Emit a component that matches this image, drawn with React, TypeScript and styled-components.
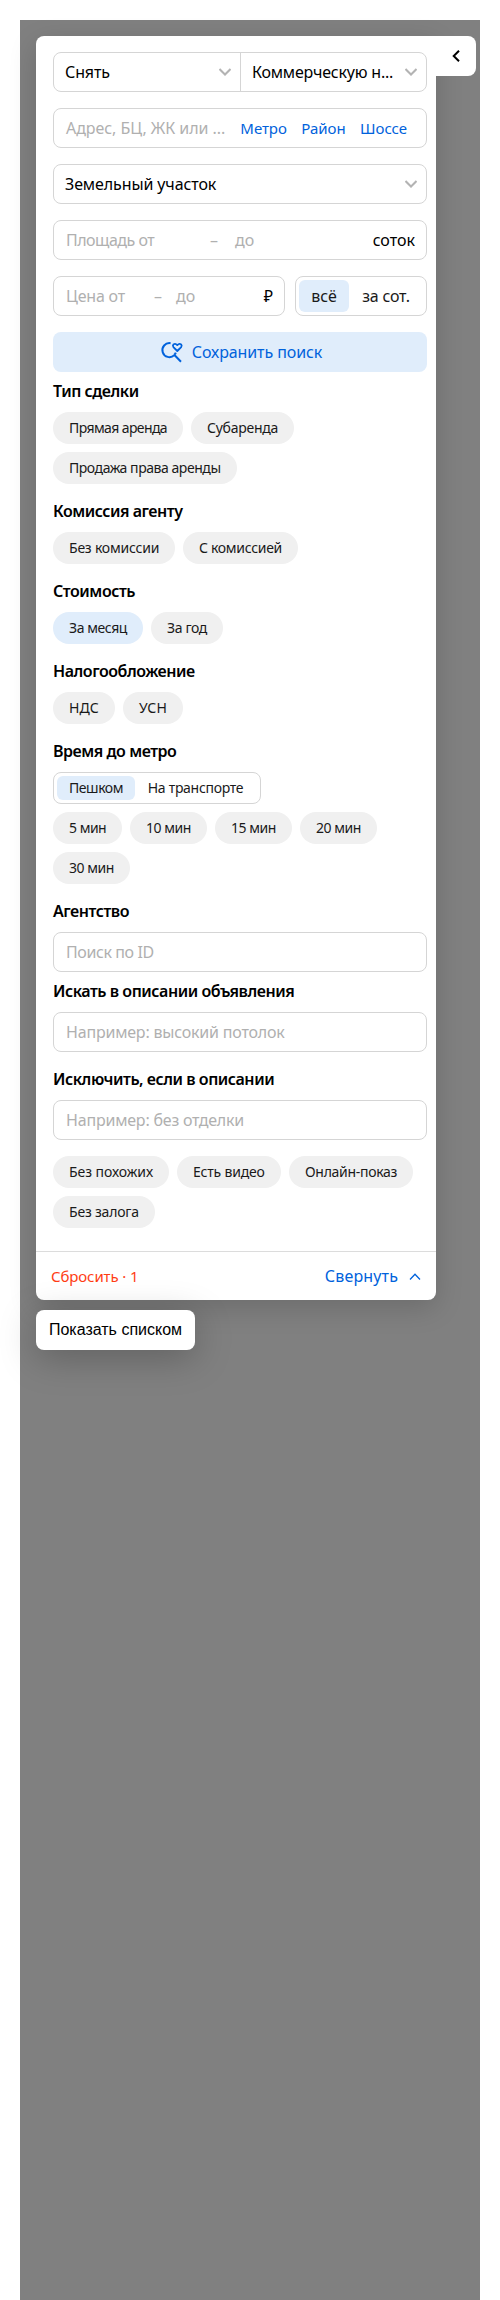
import React from 'react';
import styled, { createGlobalStyle, css } from 'styled-components';

const GlobalStyle = createGlobalStyle`
  * { box-sizing: border-box; }
  body { margin: 0; background: #fff; font-family: "Noto Sans", "Liberation Sans", sans-serif; color: #000; }
  button, input { font: inherit; color: inherit; letter-spacing: inherit; }
`;

const Page = styled.div`
  padding: 20px 20px 0;
`;

const MapArea = styled.main`
  height: 2280px;
  padding: 16px 4px 0 16px;
  background: #808080;
`;

const PanelRow = styled.div`
  display: flex;
  align-items: flex-start;
`;

const Panel = styled.section`
  width: 400px;
  height: 1264px;
  display: flex;
  flex-direction: column;
  background: #fff;
  border-radius: 8px 0 8px 8px;
  box-shadow: 0 8px 28px rgba(0, 0, 0, 0.16);
`;

const CollapseButton = styled.button`
  width: 40px;
  height: 40px;
  padding: 0 1px 0 0;
  display: flex;
  align-items: center;
  justify-content: center;
  border: 0;
  background: #fff;
  border-radius: 0 8px 8px 0;
`;

const Filters = styled.div`
  flex: 1;
  padding: 16px 9px 0 17px;
`;

const MainFields = styled.div`
  display: flex;
  flex-direction: column;
  gap: 16px;
`;

const fieldBox = css`
  height: 40px;
  border: 1px solid #d5d5d5;
  border-radius: 8px;
  background: #fff;
`;

const SelectGroup = styled.div`
  ${fieldBox}
  display: flex;
`;

const SelectButton = styled.button<{ $width?: number; $tracking?: number }>`
  flex: ${p => (p.$width ? `0 0 ${p.$width}px` : '1')};
  padding: 0 9px 0 11px;
  display: flex;
  align-items: center;
  justify-content: space-between;
  border: 0;
  background: none;
  font-size: 16px;
  letter-spacing: ${p => p.$tracking ?? 0}px;
  white-space: nowrap;

  & + & {
    border-left: 1px solid #d5d5d5;
  }
`;

const Field = styled.div<{ $width?: number }>`
  ${fieldBox}
  width: ${p => (p.$width ? `${p.$width}px` : '100%')};
  padding: 0 11px 0 12px;
  display: flex;
  align-items: center;
  font-size: 16px;
  line-height: 24px;
  white-space: nowrap;
`;

const Hint = styled.span<{ $width?: number; $tracking?: number }>`
  flex: none;
  width: ${p => (p.$width ? `${p.$width}px` : 'auto')};
  color: #b0b0b0;
  letter-spacing: ${p => p.$tracking ?? 0}px;
`;

const Unit = styled.span`
  margin-left: auto;
`;

const GeoLinks = styled.div`
  display: flex;
  gap: 14.5px;
  padding-right: 8px;
  margin-left: auto;
  color: #0062dc;
  font-size: 15px;
  letter-spacing: -0.05px;
`;

const PriceRow = styled.div`
  display: flex;
  justify-content: space-between;
`;

const Segmented = styled.div<{ $width: number; $height: number; $size: number }>`
  width: ${p => p.$width}px;
  height: ${p => p.$height}px;
  padding: 3px;
  display: flex;
  border: 1px solid #d5d5d5;
  border-radius: 8px;
  font-size: ${p => p.$size}px;
  color: #1a1a1a;
`;

const Segment = styled.button<{ $width: number; $active?: boolean; $tracking?: number }>`
  width: ${p => p.$width}px;
  padding: 0 0 1px;
  border: 0;
  border-radius: 6px;
  background: ${p => (p.$active ? '#e0edfb' : 'transparent')};
  letter-spacing: ${p => p.$tracking ?? 0}px;
  white-space: nowrap;
`;

const SaveButton = styled.button`
  height: 40px;
  padding: 0 0 1px 2px;
  display: flex;
  align-items: center;
  justify-content: center;
  gap: 8px;
  border: 0;
  border-radius: 8px;
  background: #e0edfb;
  color: #0062dc;
  font-size: 16px;
  letter-spacing: -0.1px;
`;

const Section = styled.section<{ $after?: number }>`
  margin-bottom: ${p => p.$after ?? 8}px;
`;

const Heading = styled.h3`
  height: 40px;
  margin: 0;
  font-size: 16px;
  font-weight: 600;
  line-height: 38px;
  letter-spacing: -0.46px;
  white-space: nowrap;
`;

const Chips = styled.div<{ $before?: number }>`
  display: flex;
  flex-wrap: wrap;
  gap: 8px;
  margin-top: ${p => p.$before ?? 0}px;
`;

const ChipButton = styled.button<{ $width: number; $tracking: number; $active?: boolean }>`
  width: ${p => p.$width}px;
  height: 32px;
  padding: 0 0 0 16px;
  border: 0;
  border-radius: 16px;
  background: ${p => (p.$active ? '#e0edfb' : '#f0f0f0')};
  color: #1a1a1a;
  font-size: 14px;
  line-height: 32px;
  text-align: left;
  letter-spacing: ${p => p.$tracking}px;
  white-space: nowrap;
`;

const Footer = styled.footer`
  height: 49px;
  padding: 0 15px;
  display: flex;
  align-items: center;
  justify-content: space-between;
  border-top: 1px solid #dcdcdc;
`;

const ResetButton = styled.button`
  padding: 0 0 1px;
  border: 0;
  background: none;
  color: #ff3d14;
  font-size: 15px;
  letter-spacing: -0.12px;
`;

const FoldButton = styled.button`
  padding: 0 0 1px;
  display: flex;
  align-items: center;
  gap: 11px;
  border: 0;
  background: none;
  color: #0062dc;
  font-size: 16px;
  letter-spacing: 0.15px;
`;

const ListButton = styled.button`
  position: relative;
  width: 159px;
  height: 40px;
  margin-top: 10px;
  padding: 0;
  display: block;
  border: 0;
  border-radius: 8px;
  background: #fff;
  box-shadow: 0 8px 36px rgba(0, 0, 0, 0.25);
  font-family: "Liberation Sans", Arial, sans-serif;
  font-size: 16px;
  white-space: nowrap;
`;

const ChevronDown = () => (
  <svg width="12" height="8" viewBox="0 0 12 8" fill="none" stroke="#b3b3b3" strokeWidth="2">
    <path d="M0.5 1 6 6.5 11.5 1" />
  </svg>
);

const ChevronUp = () => (
  <svg width="12" height="8" viewBox="0 0 12 8" fill="none" stroke="#0062dc" strokeWidth="1.3">
    <path d="M1 7.5 6 2.3 11 7.5" />
  </svg>
);

const ChevronLeft = () => (
  <svg width="8" height="12" viewBox="0 0 8 12" fill="none" stroke="#000" strokeWidth="2">
    <path d="M7 0.7 1.7 6 7 11.3" />
  </svg>
);

const SearchHeartIcon = () => (
  <svg width="24" height="24" viewBox="0 0 24 24" fill="none" stroke="#0062dc" strokeWidth="2">
    <path d="M10.6 3.2A7 7 0 1 0 14.3 15.1M14.2 14.8 21 21.8M14.2 14.8Q15.4 13.8 15.8 12.6" />
    <path strokeWidth="1.8" strokeLinejoin="round" d="M17.3 11 13.4 7.1Q12.4 5.7 13.5 4.4Q15.4 3 17.3 5.1Q19.2 3 21.1 4.4Q22.2 5.7 21.2 7.1Z" />
  </svg>
);

interface ChipData {
  label: string;
  width: number;
  tracking: number;
  active?: boolean;
}

const dealTypes: ChipData[] = [
  { label: 'Прямая аренда', width: 130, tracking: -0.6 },
  { label: 'Субаренда', width: 103, tracking: -0.25 },
  { label: 'Продажа права аренды', width: 184, tracking: -0.45 },
];
const commissions: ChipData[] = [
  { label: 'Без комиссии', width: 122, tracking: -0.22 },
  { label: 'С комиссией', width: 115, tracking: -0.3 },
];
const periods: ChipData[] = [
  { label: 'За месяц', width: 90, tracking: -0.42, active: true },
  { label: 'За год', width: 72, tracking: -0.36 },
];
const taxes: ChipData[] = [
  { label: 'НДС', width: 62, tracking: 0.1 },
  { label: 'УСН', width: 60, tracking: 0.2 },
];
const metroTimes: ChipData[] = [
  { label: '5 мин', width: 69, tracking: -0.5 },
  { label: '10 мин', width: 77, tracking: -0.45 },
  { label: '15 мин', width: 77, tracking: -0.45 },
  { label: '20 мин', width: 77, tracking: -0.45 },
  { label: '30 мин', width: 77, tracking: -0.45 },
];
const extras: ChipData[] = [
  { label: 'Без похожих', width: 116, tracking: -0.06 },
  { label: 'Есть видео', width: 104, tracking: -0.2 },
  { label: 'Онлайн-показ', width: 124, tracking: -0.3 },
  { label: 'Без залога', width: 102, tracking: -0.2 },
];

const ChipList = ({ items, before }: { items: ChipData[]; before?: number }) => (
  <Chips $before={before}>
    {items.map(c => (
      <ChipButton key={c.label} $width={c.width} $tracking={c.tracking} $active={c.active}>
        {c.label}
      </ChipButton>
    ))}
  </Chips>
);

export default function App() {
  return (
    <Page>
      <GlobalStyle />
      <MapArea>
        <PanelRow>
          <Panel>
            <Filters>
              <MainFields>
                <SelectGroup>
                  <SelectButton $width={186} $tracking={-0.1}>Снять<ChevronDown /></SelectButton>
                  <SelectButton $tracking={-0.2}>Коммерческую н...<ChevronDown /></SelectButton>
                </SelectGroup>
                <Field>
                  <Hint $tracking={-0.05}>Адрес, БЦ, ЖК или ...</Hint>
                  <GeoLinks><span>Метро</span><span>Район</span><span>Шоссе</span></GeoLinks>
                </Field>
                <SelectGroup>
                  <SelectButton $tracking={-0.1}>Земельный участок<ChevronDown /></SelectButton>
                </SelectGroup>
                <Field>
                  <Hint $width={144} $tracking={-0.5}>Площадь от</Hint>
                  <Hint $width={25}>–</Hint>
                  <Hint>до</Hint>
                  <Unit>соток</Unit>
                </Field>
                <PriceRow>
                  <Field $width={232}>
                    <Hint $width={88} $tracking={-0.2}>Цена от</Hint>
                    <Hint $width={22}>–</Hint>
                    <Hint>до</Hint>
                    <Unit>₽</Unit>
                  </Field>
                  <Segmented $width={132} $height={40} $size={16}>
                    <Segment $width={50} $active>всё</Segment>
                    <Segment $width={74} $tracking={-0.2}>за сот.</Segment>
                  </Segmented>
                </PriceRow>
                <SaveButton><SearchHeartIcon />Сохранить поиск</SaveButton>
              </MainFields>

              <Section><Heading>Тип сделки</Heading><ChipList items={dealTypes} /></Section>
              <Section><Heading>Комиссия агенту</Heading><ChipList items={commissions} /></Section>
              <Section><Heading>Стоимость</Heading><ChipList items={periods} /></Section>
              <Section><Heading>Налогообложение</Heading><ChipList items={taxes} /></Section>
              <Section>
                <Heading>Время до метро</Heading>
                <Segmented $width={208} $height={32} $size={14}>
                  <Segment $width={78} $active $tracking={-0.45}>Пешком</Segment>
                  <Segment $width={121} $tracking={-0.3}>На транспорте</Segment>
                </Segmented>
                <ChipList items={metroTimes} before={8} />
              </Section>
              <Section $after={0}>
                <Heading>Агентство</Heading>
                <Field><Hint $tracking={-0.4}>Поиск по ID</Hint></Field>
              </Section>
              <Section>
                <Heading>Искать в описании объявления</Heading>
                <Field><Hint $tracking={-0.2}>Например: высокий потолок</Hint></Field>
              </Section>
              <Section>
                <Heading>Исключить, если в описании</Heading>
                <Field><Hint $tracking={-0.2}>Например: без отделки</Hint></Field>
                <ChipList items={extras} before={16} />
              </Section>
            </Filters>
            <Footer>
              <ResetButton>Сбросить · 1</ResetButton>
              <FoldButton>Свернуть<ChevronUp /></FoldButton>
            </Footer>
          </Panel>
          <CollapseButton aria-label="Скрыть фильтры"><ChevronLeft /></CollapseButton>
        </PanelRow>
        <ListButton>Показать списком</ListButton>
      </MapArea>
    </Page>
  );
}
